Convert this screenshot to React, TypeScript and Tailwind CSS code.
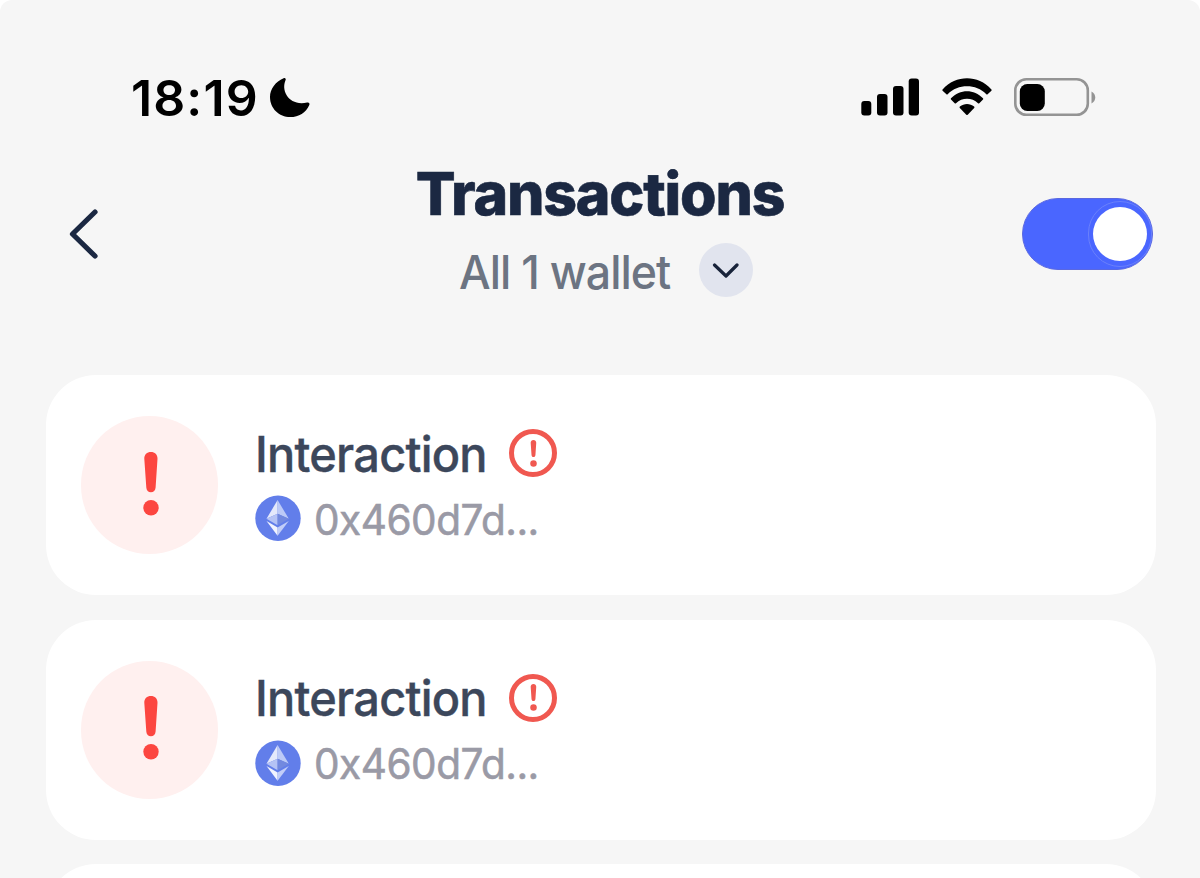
import React from "react";

function Moon() {
  return (
    <svg className="h-[42px] w-[42px]" viewBox="0 0 42 42">
      <path
        d="M14.6 2.2C15.9 1.3 17.3 2.6 16.6 4.1C11.5 15.5 20.6 30.5 38.2 26.5C39.9 26.1 41 27.3 40.3 28.9C36.9 36.6 29.8 41 21.3 41C10 41 1 32.300 1 20.900C1 13 6.500 5.500 14.600 2.200Z"
        fill="#000"
      />
    </svg>
  );
}

function Signal() {
  return (
    <svg className="h-[38px] w-[58px]" viewBox="0 0 58 38">
      <rect x="0.300" y="23" width="10" height="14.500" rx="3" />
      <rect x="16" y="16" width="10.500" height="21.500" rx="3" />
      <rect x="32" y="8" width="10.500" height="29.500" rx="3" />
      <rect x="47.700" y="0.500" width="10.300" height="37" rx="3" />
    </svg>
  );
}

function Wifi() {
  return (
    <svg className="h-[38px] w-[50px]" viewBox="0 0 50 38">
      <path d="M.6 11.400C14 -3.400 36 -3.400 49.400 11.400Q50 12.100 49.400 12.800L45.600 16.300Q44.900 16.800 44.300 16.200C34 5.600 16 5.600 5.700 16.200Q5.100 16.800 4.400 16.300L.6 12.800Q0 12.100 .6 11.400Z" />
      <path d="M9 20.300C18 10.800 32 10.800 41 20.300Q41.600 21 41 21.600L37.300 25.200Q36.700 25.700 36 25.200C30 19.300 20 19.300 14 25.200Q13.300 25.700 12.700 25.200L9 21.600Q8.400 21 9 20.300Z" />
      <path d="M17.900 28.500C22 25 28 25 32.100 28.500Q32.800 29.200 32.200 29.900L25.700 36.800Q25 37.400 24.300 36.800L17.800 29.900Q17.200 29.200 17.900 28.500Z" />
    </svg>
  );
}

function Battery() {
  return (
    <svg className="h-[40px] w-[82px]" viewBox="0 0 82 40">
      <rect x="1.300" y="2.300" width="72.500" height="35.400" rx="11" fill="none" stroke="#949494" strokeWidth="2.600" />
      <rect x="5.800" y="7" width="25" height="27" rx="7.500" fill="#000" />
      <path d="M77.500 14.500C82.500 17 82.500 24 77.500 26.500Z" fill="#949494" />
    </svg>
  );
}

function Exclamation({ className, color }: { className: string; color: string }) {
  return (
    <svg className={className} viewBox="0 0 16 64" fill={color}>
      <path d="M1.300 6.800C1.200 2.500 4 0 7.900 0C11.800 0 14.600 2.500 14.500 6.800L12.600 35.500C12.400 38.600 10.600 40.300 7.900 40.300C5.200 40.300 3.500 38.600 3.300 35.500Z" />
      <circle cx="8" cy="55.800" r="7.700" />
    </svg>
  );
}

function Ethereum() {
  return (
    <svg className="h-[46px] w-[46px]" viewBox="0 0 46 46">
      <circle cx="23" cy="23.300" r="22.700" fill="#627eea" />
      <path d="M22.600 5L11.500 23.800L22.600 18.700Z" fill="#e4e9fb" />
      <path d="M22.600 5V18.700L33.800 23.800Z" fill="#bccaf7" />
      <path d="M22.600 18.700L11.500 23.800L22.600 30.300Z" fill="#b5c3f5" />
      <path d="M22.600 18.700V30.300L33.800 23.800Z" fill="#7289df" />
      <path d="M11.500 26L22.600 40.800V32.500Z" fill="#f2f4fe" />
      <path d="M33.800 26L22.600 40.800V32.500Z" fill="#c1cdf8" />
    </svg>
  );
}

function TransactionCard({ title, address }: { title: string; address: string }) {
  return (
    <li className="flex h-[220px] shrink-0 items-center rounded-[50px] bg-white pl-[35px]">
      <div className="flex h-[138px] w-[137px] items-center justify-center rounded-full bg-[#fff0ef] pb-[3px] pl-[3px]">
        <Exclamation className="h-[64px] w-[16px]" color="#fc4640" />
      </div>
      <div className="ml-[37px] flex flex-col gap-[18px]">
        <div className="flex h-[48px] items-center">
          <span className="w-[254px] origin-left scale-x-[0.958] pt-[3px] text-[49px] leading-[48px] font-medium tracking-[-0.8px] whitespace-nowrap text-[#3c475b] [-webkit-text-stroke:0.4px_#3c475b]">
            {title}
          </span>
          <span className="flex h-[48px] w-[48px] items-center justify-center rounded-full border-5 border-[#f05850]">
            <Exclamation className="h-[27px] w-[7px]" color="#f05850" />
          </span>
        </div>
        <div className="flex h-[46px] items-center gap-[13px]">
          <Ethereum />
          <span className="origin-left scale-x-[0.965] pt-[3px] text-[42px] leading-[46px] tracking-[-0.5px] whitespace-nowrap text-[#9a9aa6] [-webkit-text-stroke:0.6px_#9a9aa6]">
            {address}
          </span>
        </div>
      </div>
    </li>
  );
}

const transactions = [
  { id: 1, title: "Interaction", address: "0x460d7d..." },
  { id: 2, title: "Interaction", address: "0x460d7d..." },
];

export default function App() {
  return (
    <div className="h-[878px] w-[1200px] overflow-hidden bg-white font-['Inter',sans-serif]">
      <div className="flex h-full flex-col overflow-hidden rounded-t-[12px] bg-[#f6f6f6]">
        <div className="mt-[73px] flex h-[48px] shrink-0 items-center justify-between pr-[104px] pl-[131px]">
          <div className="flex items-center">
            <span className="w-[138px] pt-[1px] text-[50px] leading-[48px] font-semibold tracking-[1.1px] text-black">18:19</span>
            <Moon />
          </div>
          <div className="flex items-center">
            <Signal />
            <div className="ml-[23px]">
              <Wifi />
            </div>
            <div className="ml-[22px]">
              <Battery />
            </div>
          </div>
        </div>

        <header className="mt-[42px] flex h-[142px] shrink-0 items-center justify-between pr-[47px] pl-[68px]">
          <button className="w-[110px]" aria-label="Back">
            <svg className="h-[52px] w-[32px]" viewBox="0 0 32 52" fill="none">
              <path d="M27 4L4.500 26L27 48" stroke="#1b2842" strokeWidth="5.200" strokeLinecap="round" strokeLinejoin="round" />
            </svg>
          </button>
          <div className="flex flex-col items-center self-start">
            <h1 className="pt-[1px] text-[59px] leading-[60px] font-extrabold tracking-[-1.2px] whitespace-nowrap text-[#1b2842] [-webkit-text-stroke:0.6px_#1b2842]">
              Transactions
            </h1>
            <div className="mt-[19px] flex h-[54px] items-center gap-[28px] pl-[12px]">
              <span className="w-[212px] origin-left scale-x-[0.95] pt-[3px] text-[47px] leading-[54px] font-medium tracking-[-1px] whitespace-nowrap text-[#6c7482]">
                All 1 wallet
              </span>
              <button className="flex h-[54px] w-[54px] items-center justify-center rounded-full bg-[#e1e4ee]" aria-label="Choose wallet">
                <svg className="h-[16px] w-[28px]" viewBox="0 0 28 16" fill="none">
                  <path d="M2.500 3L14 14L25 3" stroke="#18233a" strokeWidth="3.200" strokeLinecap="round" strokeLinejoin="round" />
                </svg>
              </button>
            </div>
          </div>
          <button
            className="flex h-[72px] w-[131px] items-center justify-end rounded-full border border-[#5a68e0] bg-[#4a66ff]"
            aria-label="Toggle"
          >
            <span className="flex h-[66px] w-[64px] items-center justify-center rounded-full border border-[#6a80fb]">
              <span className="h-[54px] w-[54px] shrink-0 rounded-full bg-white" />
            </span>
          </button>
        </header>

        <ul className="flex flex-col gap-[24.5px] pt-[70px] pr-[44px] pl-[46px]">
          {transactions.map((t) => (
            <TransactionCard key={t.id} title={t.title} address={t.address} />
          ))}
          <li className="h-[220px] shrink-0 rounded-[50px] bg-white" />
        </ul>
      </div>
    </div>
  );
}
